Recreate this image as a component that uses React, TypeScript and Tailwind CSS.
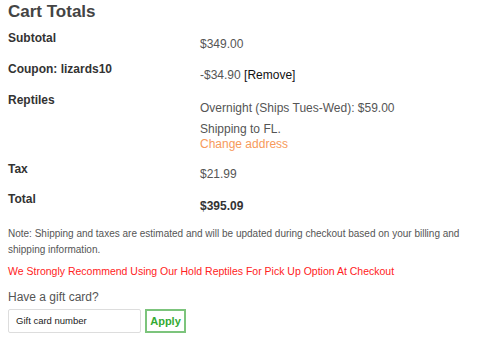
import React from "react";

const font = { fontFamily: '"Liberation Sans", Arial, sans-serif' };

function Row({ label, children, vt = "pt-[6px]" }: { label: string; children: React.ReactNode; vt?: string }) {
  return (
    <div className="flex items-start mb-[10px]">
      <div className="w-[192px] shrink-0 text-[12px] leading-[15px] font-bold text-[#333]">{label}</div>
      <div className={`flex-1 text-[12px] leading-[15px] text-[#555] ${vt}`}>{children}</div>
    </div>
  );
}

export default function App() {
  return (
    <div className="w-[500px] h-[341px] bg-white px-[8px] overflow-hidden" style={font}>
      <h2 className="text-[17px] leading-[20px] font-bold text-[#444] pt-[2px] mb-[9px]">Cart Totals</h2>
      <Row label="Subtotal">$349.00</Row>
      <Row label="Coupon: lizards10">
        -$34.90 <span className="text-[#111]">[Remove]</span>
      </Row>
      <Row label="Reptiles" vt="pt-[8px]">
        <div>Overnight (Ships Tues-Wed): $59.00</div>
        <div className="mt-[6px]">Shipping to FL.</div>
        <div className="text-[#f79a5b]">Change address</div>
      </Row>
      <Row label="Tax" vt="pt-[5px]">$21.99</Row>
      <Row label="Total" vt="pt-[7px]">
        <span className="font-bold text-[#333]">$395.09</span>
      </Row>
      <p className="text-[10px] leading-[16px] text-[#555] mt-[12px]">
        Note: Shipping and taxes are estimated and will be updated during checkout based on your billing and shipping information.
      </p>
      <p className="text-[10.5px] leading-[15px] text-[#f22] mt-[6px]">
        We Strongly Recommend Using Our Hold Reptiles For Pick Up Option At Checkout
      </p>
      <div className="text-[12px] leading-[15px] text-[#555] mt-[11px]">Have a gift card?</div>
      <div className="flex gap-[4px] mt-[4px]">
        <div className="w-[133px] h-[24px] border border-[#ddd] rounded-[2px] flex items-center pl-[7px] text-[9.5px] text-[#222]">
          Gift card number
        </div>
        <div className="w-[41px] h-[24px] border-2 border-[#7cc47c] flex items-center justify-center text-[11px] font-bold text-[#3a3]">
          Apply
        </div>
      </div>
    </div>
  );
}
